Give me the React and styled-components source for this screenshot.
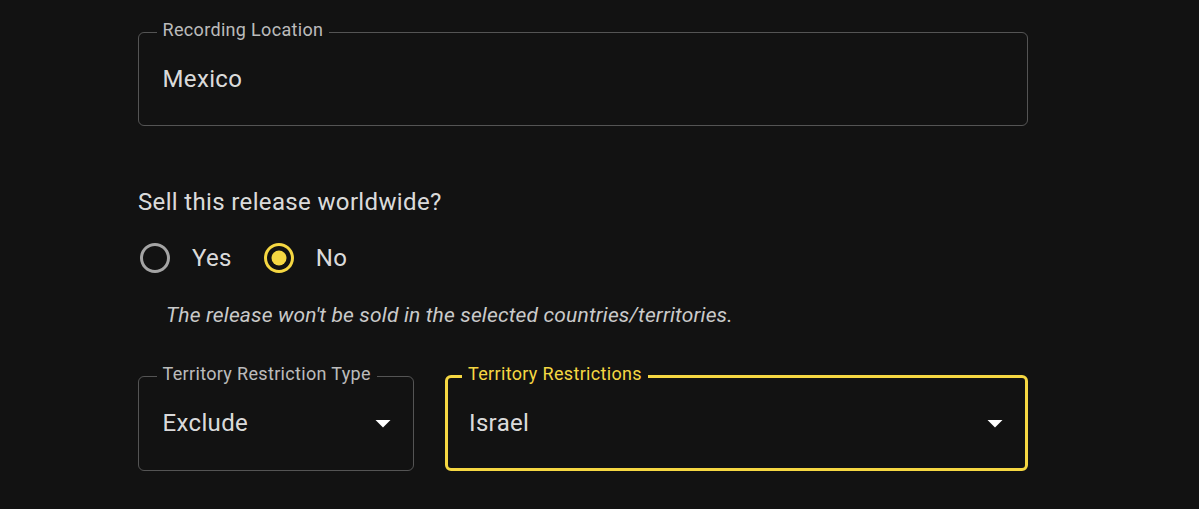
import React from 'react'
import styled, { createGlobalStyle } from 'styled-components'

const GlobalStyle = createGlobalStyle`
  html, body {
    margin: 0;
    background: #121212;
  }
  body {
    font-family: Roboto, "Liberation Sans", sans-serif;
    color: rgba(255, 255, 255, 0.87);
  }
`;

const YELLOW = '#f5d742';

const Page = styled.div`
  width: 890px;
  padding: 19.5px 0 0 138px;
  display: flex;
  flex-direction: column;
`;

const Field = styled.fieldset`
  margin: 0;
  padding: 0 ${p => (p.$focused ? 12.5 : 12)}px ${p => (p.$focused ? 10 : 11.5)}px ${p => (p.$focused ? 21 : 23.5)}px;
  border: ${p => (p.$focused ? '3px' : '1.5px')} solid
    ${p => (p.$focused ? YELLOW : 'rgba(255, 255, 255, 0.28)')};
  border-radius: 6px;
  min-width: 0;
  legend {
    margin-left: ${p => (p.$focused ? -7 : -6)}px;
    padding: 0 6px 5px;
    font-size: 18px;
    line-height: 20px;
    letter-spacing: 0.33px;
    color: ${p => (p.$focused ? YELLOW : 'rgba(255, 255, 255, 0.72)')};
  }
`;

const ValueRow = styled.div`
  height: 69px;
  display: flex;
  align-items: center;
  justify-content: space-between;
  font-size: 24px;
  letter-spacing: 0.35px;
  color: rgba(255, 255, 255, 0.87);
  svg {
    width: 36px;
    height: 36px;
    fill: #fff;
  }
`;

const Question = styled.div`
  margin-top: 58px;
  font-size: 24px;
  line-height: 36px;
  letter-spacing: 0.35px;
  color: rgba(255, 255, 255, 0.87);
`;

const RadioRow = styled.div`
  margin-top: 20px;
  display: flex;
  align-items: center;
  gap: 29px;
  margin-left: -1px;
`;

const RadioOption = styled.label`
  display: flex;
  align-items: center;
  gap: 19px;
  font-size: 24px;
  line-height: 36px;
  letter-spacing: 0.35px;
  color: rgba(255, 255, 255, 0.87);
  svg {
    width: 36px;
    height: 36px;
    fill: ${p => (p.$checked ? YELLOW : 'rgba(255, 255, 255, 0.62)')};
  }
`;

const Helper = styled.div`
  margin: 24px 0 0 28px;
  font-size: 21px;
  line-height: 30px;
  letter-spacing: 0.16px;
  font-style: italic;
  color: rgba(255, 255, 255, 0.78);
`;

const Grid = styled.div`
  margin-top: 33.5px;
  display: grid;
  grid-template-columns: 276px 1fr;
  gap: 31px;
`;

const RadioIcon = ({ checked }) => (
  <svg viewBox="0 0 24 24">
    <path d="M12 2C6.48 2 2 6.48 2 12s4.48 10 10 10 10-4.48 10-10S17.52 2 12 2zm0 18c-4.42 0-8-3.58-8-8s3.58-8 8-8 8 3.58 8 8-3.58 8-8 8z" />
    {checked && <circle cx="12" cy="12" r="5" />}
  </svg>
);

const Arrow = () => (
  <svg viewBox="0 0 24 24">
    <path d="M7 10l5 5 5-5z" />
  </svg>
);

function TextField({ label, value, select, focused }) {
  return (
    <Field $focused={focused}>
      <legend>{label}</legend>
      <ValueRow>
        <span>{value}</span>
        {select && <Arrow />}
      </ValueRow>
    </Field>
  );
}

export default function App() {
  return (
    <>
      <GlobalStyle />
      <Page>
        <TextField label="Recording Location" value="Mexico" />
        <Question>Sell this release worldwide?</Question>
        <RadioRow>
          <RadioOption>
            <RadioIcon />
            Yes
          </RadioOption>
          <RadioOption $checked>
            <RadioIcon checked />
            No
          </RadioOption>
        </RadioRow>
        <Helper>The release won't be sold in the selected countries/territories.</Helper>
        <Grid>
          <TextField label="Territory Restriction Type" value="Exclude" select />
          <TextField label="Territory Restrictions" value="Israel" select focused />
        </Grid>
      </Page>
    </>
  );
}
